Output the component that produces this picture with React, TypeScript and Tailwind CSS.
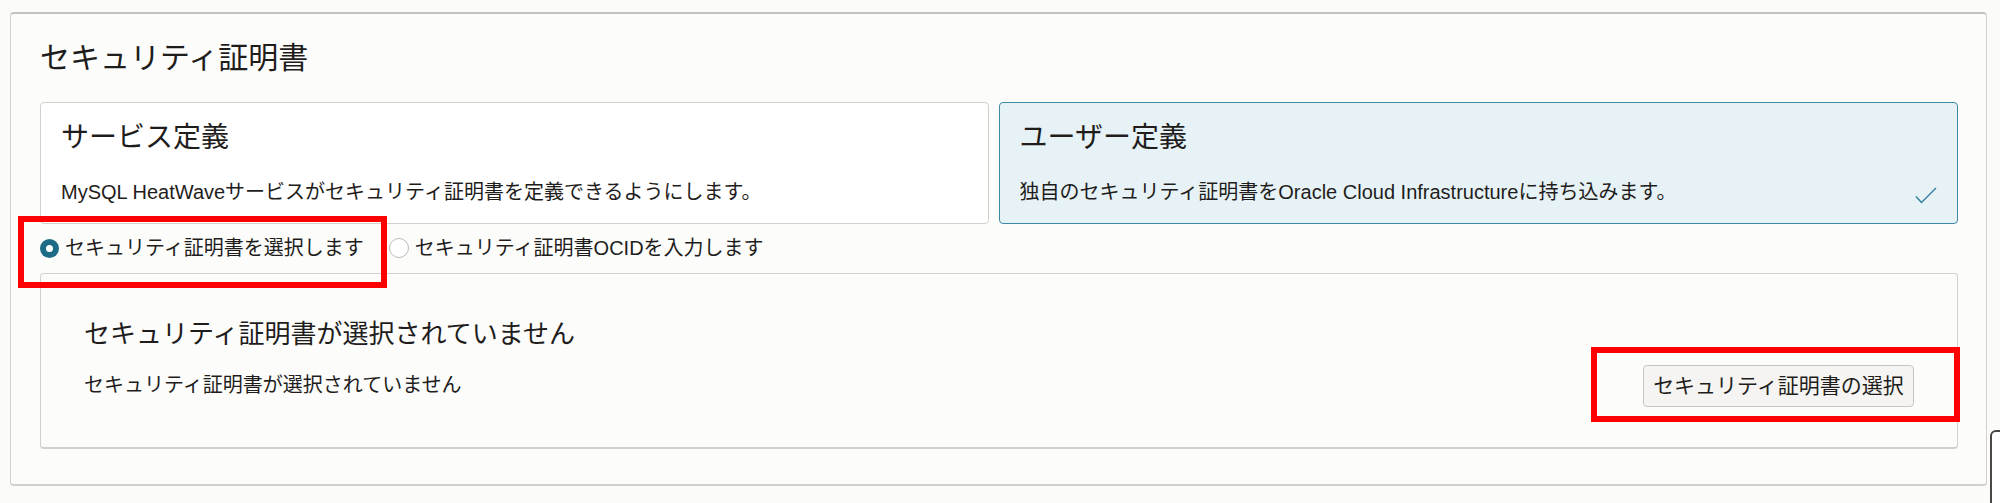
import React from 'react';

const FONT = '"Liberation Sans", "Noto Sans CJK JP", sans-serif';

const Radio = ({ checked, label }: { checked: boolean; label: string }) => (
  <label className="flex items-center gap-[6px] cursor-pointer">
    {checked ? (
      <span className="w-[19px] h-[19px] rounded-full bg-[#1d6b87] flex items-center justify-center">
        <span className="w-[7px] h-[7px] rounded-full bg-white" />
      </span>
    ) : (
      <span className="w-[20px] h-[20px] rounded-full border-[1.5px] border-[#bdb9b5] bg-white" />
    )}
    <span className="text-[20px] leading-[24px]">{label}</span>
  </label>
);

const OptionCard = ({ title, desc, selected }: { title: string; desc: string; selected?: boolean }) => (
  <div
    className={
      selected
        ? 'relative h-[122px] rounded-[4px] border-[1.5px] border-[#3d8aa8] bg-[#e7f2f6] pl-[20px] pt-[17px]'
        : 'relative h-[122px] rounded-[4px] border-[1.5px] border-[#d3d0cc] bg-white pl-[20px] pt-[17px]'
    }
  >
    <div className="text-[28px] leading-[36px]">{title}</div>
    <div className="mt-[24px] text-[20px] leading-[24px]">{desc}</div>
    {selected && (
      <svg className="absolute right-[20px] top-[84px]" width="22" height="17" viewBox="0 0 22 17" fill="none">
        <path d="M1 9.5 L6.5 15.5 L21 1" stroke="#2e7d9a" strokeWidth="1.4" />
      </svg>
    )}
  </div>
);

export default function App() {
  return (
    <div className="relative min-h-[503px] bg-[#fbfbfa] text-[#1f1d1b] pt-[12px] pl-[10px]" style={{ fontFamily: FONT }}>
      <div className="w-[1977px] rounded-[4px] border border-[#d3d0cc] border-t-2 border-t-[#c6c2be] border-b-2 bg-[#fcfcfb] pl-[29px] pr-[28px] pt-[26px] pb-[35px]">
        <h2 className="text-[30px] leading-[36px] font-normal">セキュリティ証明書</h2>

        <div className="mt-[26px] grid grid-cols-[949fr_960fr] gap-[10px]">
          <OptionCard title="サービス定義" desc="MySQL HeatWaveサービスがセキュリティ証明書を定義できるようにします。" />
          <OptionCard selected title="ユーザー定義" desc="独自のセキュリティ証明書をOracle Cloud Infrastructureに持ち込みます。" />
        </div>

        <div className="mt-[12px] flex items-center gap-[25px]">
          <Radio checked label="セキュリティ証明書を選択します" />
          <Radio checked={false} label="セキュリティ証明書OCIDを入力します" />
        </div>

        <div className="mt-[13px] h-[176px] rounded-[4px] border border-[#d3d0cc] border-b-2 bg-[#fcfcfb] px-[43px] pt-[44px]">
          <div className="text-[26px] leading-[32px]">セキュリティ証明書が選択されていません</div>
          <div className="mt-[15px] flex items-start justify-between">
            <div className="mt-[8px] text-[20px] leading-[24px]">セキュリティ証明書が選択されていません</div>
            <button className="h-[42px] w-[271px] rounded-[4px] border border-[#c9c6c2] bg-[#f5f4f2] text-[21px] leading-[26px] text-[#1f1d1b]">
              セキュリティ証明書の選択
            </button>
          </div>
        </div>
      </div>

      {/* annotation boxes */}
      <div className="absolute left-[18px] top-[216px] w-[369px] h-[72px] border-[6px] border-[#ff0000] pointer-events-none" />
      <div className="absolute left-[1591px] top-[347px] w-[369px] h-[75px] border-[6px] border-[#ff0000] pointer-events-none" />

      {/* cut-off element at right edge */}
      <div className="absolute left-[1990px] top-[430px] w-[20px] h-[80px] rounded-tl-[6px] border-2 border-[#4a4744] bg-white" />
    </div>
  );
}
